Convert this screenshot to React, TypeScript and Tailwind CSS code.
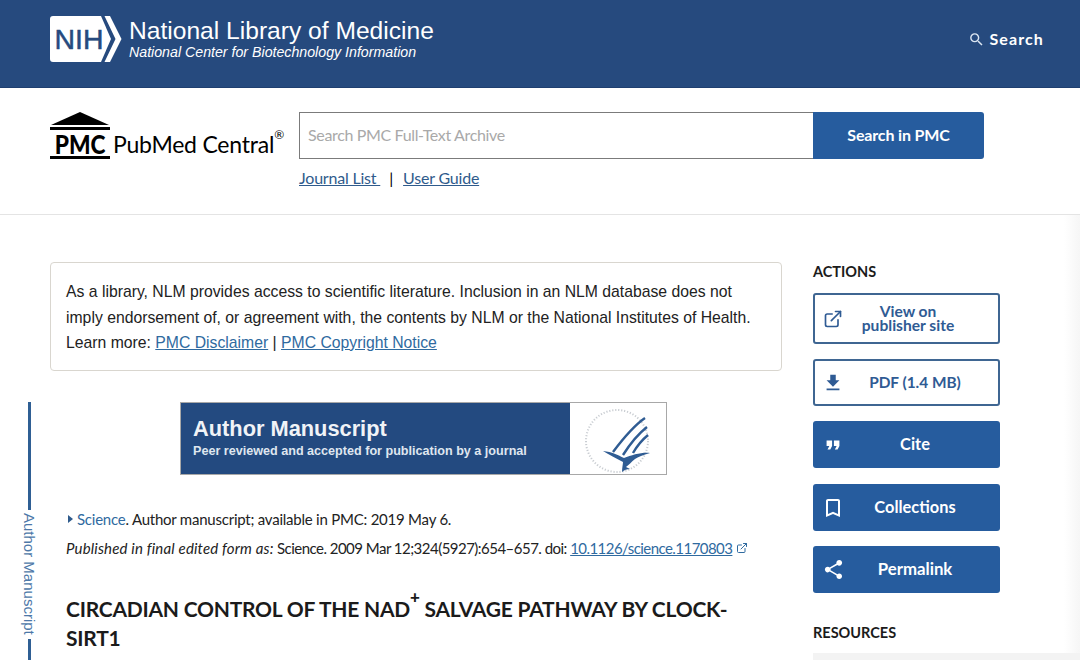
import React from "react";
import { MdFileDownload, MdBookmarkBorder, MdShare, MdFormatQuote, MdSearch } from "react-icons/md";
import { ExternalLink } from "lucide-react";

const sans = "font-['Lato','Noto_Sans',sans-serif]";
const arial = "font-['Liberation_Sans',Arial,sans-serif]";

function NihLogo() {
  return (
    <svg width="72" height="46" viewBox="0 0 72 46" className="block shrink-0">
      <path d="M3 0H51L61 23L51 46H3a3 3 0 0 1-3-3V3a3 3 0 0 1 3-3z" fill="#fff" />
      <path d="M54.5 0H60L71.5 23L60 46H54.5L65.5 23z" fill="#fff" />
      <text x="4.5" y="33" fontSize="28" fill="#264a7e" stroke="#264a7e" strokeWidth="0.5" textLength="49" lengthAdjust="spacingAndGlyphs" fontFamily="Liberation Sans, Arial, sans-serif">NIH</text>
    </svg>
  );
}

function Eagle() {
  return (
    <svg width="96" height="71" viewBox="0 0 96 71" className="block">
      <circle cx="47" cy="38" r="31" fill="none" stroke="#c9cdd2" strokeWidth="2" strokeDasharray="1.2 1.8" />
      <path d="M75 15C62 24 52 37 43 49" fill="none" stroke="#2f5c93" strokeWidth="2.4" />
      <path d="M77 24C68 31 60 41 53 52" fill="none" stroke="#2f5c93" strokeWidth="2.4" />
      <path d="M78 32C72 37 67 43 63 50" fill="none" stroke="#2f5c93" strokeWidth="2.4" />
      <path d="M33 48C42 49 48 52 54 55C62 52 72 49 80 50C73 52 68 54 65 56C61 59 59 62 56 64L60 66C57 66 54 67 52 69C52 65 53 61 53 59C46 55 39 52 33 48Z" fill="#2f5c93" />
    </svg>
  );
}

function ActionButton({ icon, label, outline, h, textClass }: { icon: React.ReactNode; label: React.ReactNode; outline?: boolean; h: string; textClass: string }) {
  return (
    <div
      className={`${h} w-[187px] rounded-[3px] flex items-center font-bold leading-[14px] ${
        outline ? "border-2 border-[#3f6692] text-[#2f5b94] bg-white" : "bg-[#265c9e] text-white"
      }`}
    >
      <div className={`w-[40px] shrink-0 flex justify-center ${outline ? "-ml-[2px]" : ""}`}>{icon}</div>
      <div className={`flex-1 text-center pb-[2px] ${textClass}`}>{label}</div>
    </div>
  );
}

export default function App() {
  return (
    <div className={`w-[1080px] h-[660px] overflow-hidden bg-white ${sans}`}>
      <header className="h-[88px] bg-[#264a7e] flex items-start pl-[50px] pr-[36px] pt-[16px] border-b border-[#1f3f70]">
        <NihLogo />
        <div className={`ml-[7px] text-white ${arial}`}>
          <div className="text-[24.6px] leading-[29px]">National Library of Medicine</div>
          <div className="text-[14.2px] leading-[15px] italic">National Center for Biotechnology Information</div>
        </div>
        <div className="ml-auto mt-[12px] flex items-center text-white">
          <MdSearch className="text-[#dce6f2]" size={17} />
          <span className="ml-[5px] text-[16px] font-bold tracking-[1.1px] leading-[22px]">Search</span>
        </div>
      </header>

      <section className="h-[127px] border-b border-[#e4e4e4] flex items-start pl-[50px] pt-[24px]">
        <div className="w-[249px] flex items-end shrink-0">
          <div className="w-[60px] shrink-0">
            <svg width="60" height="19" viewBox="0 0 60 19" className="block">
              <path d="M30 0L59 13H1z" fill="#000" />
              <rect x="0" y="15" width="60" height="3" fill="#000" />
            </svg>
            <div className="h-[25px] text-center text-[27px] leading-[25px] font-black text-black scale-x-[0.84]">PMC</div>
            <div className="h-[3px] bg-black" />
          </div>
          <div className="ml-[3px] mb-[1px] text-[23px] leading-[28px] text-black whitespace-nowrap tracking-[-0.22px]">
            PubMed Central<sup className="text-[12px] align-[8px] leading-none">®</sup>
          </div>
        </div>
        <div>
          <div className="flex w-[685px] h-[47px]">
            <div className="flex-1 border border-[#7b7b7b] border-r-0 flex items-center pl-[8px] pb-[2px] text-[16px] tracking-[-0.35px] text-[#a9a9a9]">
              Search PMC Full-Text Archive
            </div>
            <div className="w-[171px] bg-[#265c9e] rounded-r-[3px] flex items-center justify-center pb-[2px] text-white font-bold text-[16px] tracking-[-0.15px]">
              Search in PMC
            </div>
          </div>
          <div className="mt-[7px] flex items-center text-[16px] leading-[24px] tracking-[-0.2px] text-[#2f5b8c]">
            <span className="underline">Journal List&nbsp;</span>
            <span className="ml-[9px] mr-[10px] text-black">|</span>
            <span className="underline">User Guide</span>
          </div>
        </div>
      </section>

      <main className="flex">
        <div className="w-[50px] shrink-0 pt-[187px] flex flex-col items-start pl-[21px]">
          <div className="w-[3px] h-[108px] bg-[#2f5f94] ml-[7px]" />
          <div className={`mt-[3px] mb-[4px] text-[15px] leading-[16px] text-[#4d78a8] whitespace-nowrap ${arial} [writing-mode:vertical-rl]`}>
            Author Manuscript
          </div>
          <div className="w-[3px] h-[30px] bg-[#2f5f94] ml-[7px]" />
        </div>

        <div className="w-[732px] shrink-0 pt-[47px]">
          <div className={`h-[109px] border border-[#d9d6cf] rounded-[4px] px-[15px] pt-[16px] text-[15.75px] leading-[25.5px] text-[#222] whitespace-nowrap ${arial}`}>
            <div>As a library, NLM provides access to scientific literature. Inclusion in an NLM database does not</div>
            <div>imply endorsement of, or agreement with, the contents by NLM or the National Institutes of Health.</div>
            <div>
              Learn more: <span className="text-[#2f6a9f] underline">PMC Disclaimer</span> |{" "}
              <span className="text-[#2f6a9f] underline">PMC Copyright Notice</span>
            </div>
          </div>

          <div className={`ml-[130px] mt-[31px] w-[487px] h-[73px] flex border border-[#a8a8a8] ${arial}`}>
            <div className="w-[389px] bg-[#234a80] text-[#f0f3f7] pl-[12px] pt-[12px]">
              <div className="text-[21.8px] leading-[27px] font-bold">Author Manuscript</div>
              <div className="text-[12.6px] leading-[17px] mt-[1px] font-bold text-[#dfe6ef]">Peer reviewed and accepted for publication by a journal</div>
            </div>
            <div className="flex-1 bg-white">
              <Eagle />
            </div>
          </div>

          <div className="mt-[33px] ml-[18px] text-[15px] leading-[22px] tracking-[-0.23px] text-[#222] flex items-center whitespace-nowrap">
            <span className="w-0 h-0 border-y-[4px] border-y-transparent border-l-[5px] border-l-[#2f5b8c] mr-[4px]" />
            <span className="text-[#2f6a9f]">Science</span>. Author manuscript; available in PMC: 2019 May 6.
          </div>
          <div className="mt-[7px] ml-[16px] text-[15px] leading-[22px] text-[#222] flex items-center whitespace-nowrap">
            <span className="tracking-[0.17px] italic">Published in final edited form as:</span>
            <span className="tracking-[-0.52px]">&nbsp;Science. 2009 Mar 12;324(5927):654–657. doi:&nbsp;</span>
            <span className="text-[#2f6a9f] underline tracking-[-0.55px]">10.1126/science.1170803</span>
            <ExternalLink className="ml-[4px] text-[#2f6a9f]" size={12} />
          </div>

          <h1 className="mt-[35px] ml-[16px] text-[21px] leading-[29px] font-bold tracking-[-0.23px] text-[#1b1b1b] whitespace-nowrap">
            CIRCADIAN CONTROL OF THE NAD<sup className="text-[17px] font-black align-[6px] leading-none">+</sup> SALVAGE PATHWAY BY CLOCK-
            <br />
            SIRT1
          </h1>
        </div>

        <aside className="ml-[31px] flex-1 pt-[47px] bg-gradient-to-r from-white from-[94%] to-[#f6f6f6]">
          <div className="text-[14.5px] leading-[20px] font-bold text-[#1b1b1b]">ACTIONS</div>
          <div className="mt-[11px] flex flex-col">
            <ActionButton h="h-[51px]" outline icon={<ExternalLink size={20} strokeWidth={2} />} textClass="pr-[35px] text-[15.6px]" label={<>View on<br />publisher site</>} />
            <div className="h-[15px]" />
            <ActionButton h="h-[47px]" outline icon={<MdFileDownload size={22} />} textClass="pr-[21px] text-[15.4px]" label="PDF (1.4 MB)" />
            <div className="h-[15px]" />
            <ActionButton h="h-[47px]" icon={<MdFormatQuote size={22} />} textClass="pr-[23px] text-[16.4px]" label="Cite" />
            <div className="h-[16px]" />
            <ActionButton h="h-[47px]" icon={<MdBookmarkBorder size={24} />} textClass="pr-[23px] text-[16.4px]" label="Collections" />
            <div className="h-[15px]" />
            <ActionButton h="h-[47px]" icon={<MdShare size={23} />} textClass="pr-[23px] text-[16.8px]" label="Permalink" />
          </div>
          <div className="mt-[30px] text-[14.5px] leading-[20px] font-bold text-[#1b1b1b]">RESOURCES</div>
          <div className="mt-[10px] h-[20px] bg-[#f3f3f3]" />
        </aside>
      </main>
    </div>
  );
}
